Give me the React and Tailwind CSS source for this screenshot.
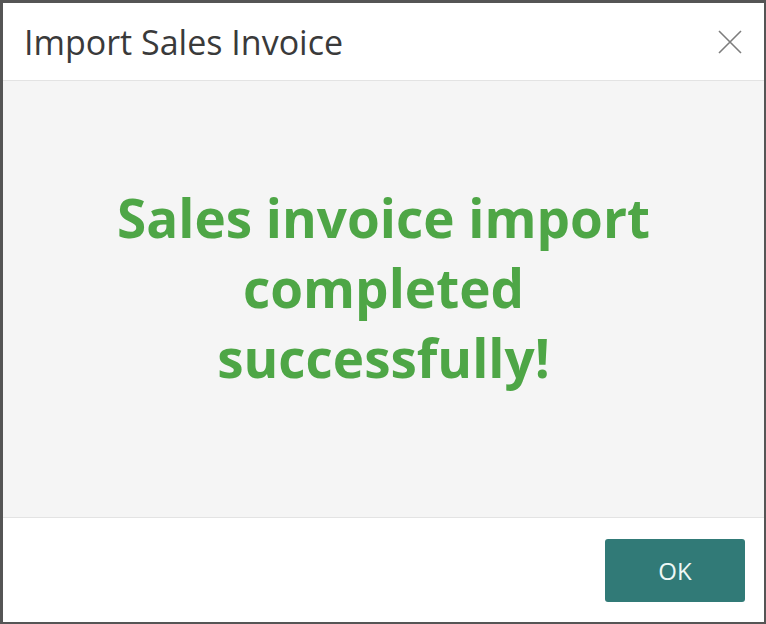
export default function App() {
  const font = { fontFamily: '"Open Sans", "Noto Sans", sans-serif' };

  return (
    <div className="w-[766px] h-[624px] bg-white" style={font}>
      <div className="flex h-full flex-col border-t-[3px] border-l-[3px] border-r-2 border-b-2 border-[#555555]">

        {/* header */}
        <header className="flex h-[78px] shrink-0 items-center justify-between border-b border-[#e3e3e3] bg-white pl-[21px] pr-[22px]">
          <h1 className="text-[34px] font-normal leading-none text-[#3a3a3a]">
            Import Sales Invoice
          </h1>
          <button className="flex h-[24px] w-[24px] items-center justify-center">
            <svg width="24" height="24" viewBox="0 0 24 24">
              <path d="M1 1 L23 23 M23 1 L1 23" stroke="#7d7d7d" strokeWidth="1.6" fill="none" />
            </svg>
          </button>
        </header>

        {/* body */}
        <main className="flex h-[437px] shrink-0 flex-col items-center border-b border-[#e3e3e3] bg-[#f5f5f5] pt-[102px]">
          <p className="max-w-[560px] text-center text-[53px] font-bold leading-[70px] text-[#4ea646]">
            Sales invoice import completed successfully!
          </p>
        </main>

        {/* footer */}
        <footer className="flex flex-1 items-start justify-end bg-white pt-[21px] pr-[19px]">
          <button className="flex h-[63px] w-[140px] items-center justify-center rounded-[3px] bg-[#317a77] text-[24px] font-medium text-[#eef8f6]">
            OK
          </button>
        </footer>

      </div>
    </div>
  );
}
